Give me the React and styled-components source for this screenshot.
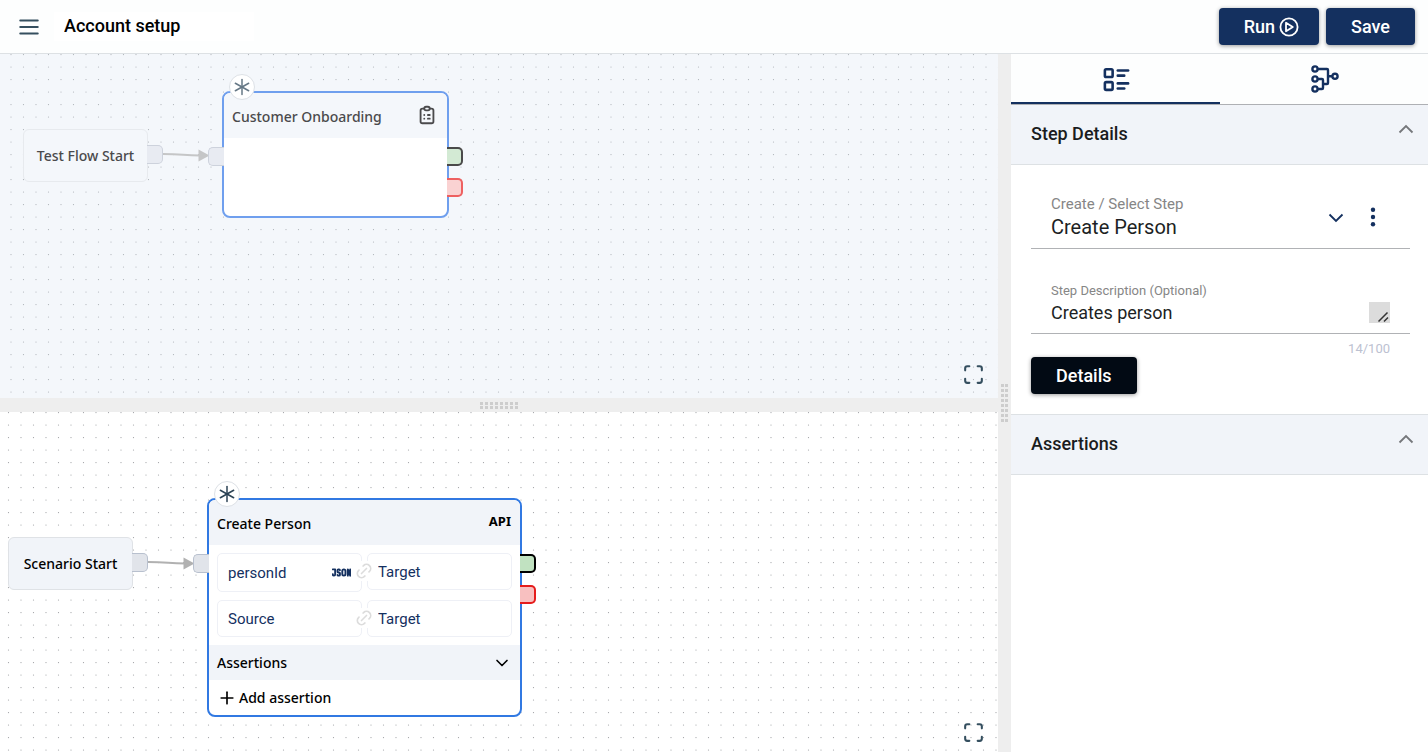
/* eslint-disable react/prop-types */
import { useId, useState } from "react";
import styled, { createGlobalStyle, css } from "styled-components";
import {
  TbAsterisk,
  TbChevronDown,
  TbClipboardList,
  TbJson,
  TbLink,
  TbListDetails,
  TbMaximize,
  TbMenu2,
  TbPlus,
} from "react-icons/tb";

const GlobalStyles = createGlobalStyle`
  :root {
    --color-navy: #14305f;
    --color-slate: #354f5f;
    --color-tint: #f1f4f9;
    --color-line: #dde1e4;
    --font-ui: Roboto, "Liberation Sans", sans-serif;
    --font-node: "Noto Sans", "Open Sans", sans-serif;
  }

  *,
  *::before,
  *::after {
    box-sizing: border-box;
  }

  body {
    margin: 0;
    font-family: var(--font-ui);
    color: #1d1f24;
    background-color: #fff;
  }

  button,
  input,
  select,
  textarea {
    font: inherit;
    color: inherit;
  }
`;

const Page = styled.div`
  display: grid;
  grid-template-rows: auto 1fr;
  min-height: 100vh;
`;

const Header = styled.header`
  display: flex;
  align-items: center;
  gap: 12px;
  padding: 8px 13px 8px 16px;
  background-color: #fdfefe;
  border-bottom: 1px solid var(--color-line);
`;

const IconButton = styled.button`
  display: flex;
  padding: 0;
  border: none;
  background: none;
  color: ${(props) => props.$color || "var(--color-slate)"};
  cursor: pointer;
`;

const TitleInput = styled.input`
  flex: 1;
  min-width: 0;
  max-width: 200px;
  padding: 3px 10px 5px;
  border: none;
  font-size: 18px;
  font-weight: 500;
  color: #000;
  background-color: #fff;
`;

const HeaderActions = styled.div`
  display: flex;
  gap: 7px;
  margin-left: auto;
`;

const Button = styled.button`
  display: flex;
  align-items: center;
  gap: 4px;
  height: 37px;
  padding: 0 ${(props) => (props.$hasIcon ? 20 : 25)}px 0 25px;
  border: none;
  border-radius: 4px;
  font-size: 18px;
  font-weight: 500;
  color: #fff;
  background-color: ${(props) => props.$bg || "var(--color-navy)"};
  box-shadow: 0 1px 4px rgba(0, 0, 0, 0.4);
  cursor: pointer;
`;

const Workspace = styled.div`
  display: grid;
  grid-template-columns: minmax(0, 1fr) 13px minmax(320px, 417px);
`;

const Canvases = styled.main`
  display: grid;
  grid-template-rows: 344fr 14px 340fr;
`;

const Splitter = styled.div`
  display: flex;
  align-items: center;
  justify-content: center;
  background-color: #eee;
  cursor: ${(props) => (props.$vertical ? "col-resize" : "row-resize")};
`;

const Grip = styled.div`
  width: ${(props) => (props.$vertical ? 7 : 39)}px;
  height: ${(props) => (props.$vertical ? 39 : 7)}px;
  background-image: conic-gradient(
    from 270deg at 3px 3px,
    #cdcdcd 90deg,
    transparent 0
  );
  background-size: ${(props) => (props.$vertical ? "4px 5px" : "5px 4px")};
`;

/* Canvas and nodes */

const activeColors = css`
  --canvas: #fff;
  --dot: #9a9ca0;
  --edge: #b1b1b1;
  --text: #000;
  --icon: #2b4254;
  --selected: #3179e2;
  --node: #f1f4f9;
  --node-line: #dfe2e6;
  --source: #e1e4ea;
  --source-line: #b8c0ce;
  --pass: #c1e2c1;
  --pass-line: #000;
  --fail: #f8c0c0;
  --fail-line: #e51c1c;
`;

const mutedColors = css`
  --canvas: #f4f7fb;
  --dot: #abafb5;
  --edge: #c5c6c7;
  --text: #4a4a4c;
  --icon: #667886;
  --selected: #6f9fee;
  --node: #f4f7fb;
  --node-line: #e7eaee;
  --source: #e8ebf2;
  --source-line: #cdd2dc;
  --pass: #d3ead4;
  --pass-line: #4a4a4a;
  --fail: #fad2d2;
  --fail-line: #ee6060;
`;

const Canvas = styled.section`
  ${(props) => (props.$muted ? mutedColors : activeColors)}
  position: relative;
  overflow: hidden;
  background-color: var(--canvas);
`;

const Backdrop = styled.svg`
  position: absolute;
  inset: 0;
  width: 100%;
  height: 100%;
`;

const NodeBox = styled.div`
  position: absolute;
  left: ${(props) => props.$x}px;
  top: ${(props) => props.$y}px;
  font-family: var(--font-node);
  font-size: 14px;
  font-weight: 500;
  color: var(--text);
`;

const StartBox = styled(NodeBox)`
  display: flex;
  align-items: center;
  justify-content: center;
  width: 125px;
  height: 53px;
  border: 1px solid var(--node-line);
  border-radius: 6px;
  background-color: var(--node);
`;

const StepBox = styled(NodeBox)`
  width: ${(props) => props.$width}px;
  border: 2px solid var(--selected);
  border-radius: 8px;
  background-color: #fff;
`;

const StepHeader = styled.div`
  display: flex;
  align-items: center;
  justify-content: space-between;
  height: 45px;
  padding: 2px 9px 0 8px;
  border-radius: 6px 6px 0 0;
  background-color: var(--node);

  svg {
    margin-bottom: 4px;
  }
`;

const EmptyBody = styled.div`
  height: 78px;
`;

const ApiTag = styled.span`
  padding-bottom: 6px;
  font-size: 13px;
  font-weight: 700;
`;

const Badge = styled.span`
  position: absolute;
  left: 5px;
  top: -19px;
  display: flex;
  align-items: center;
  justify-content: center;
  width: 26px;
  height: 26px;
  border: 1px solid #dde1e6;
  border-radius: 50%;
  color: var(--icon);
  background-color: #fff;
`;

const Handle = styled.span`
  position: absolute;
  top: ${(props) => props.$top}px;
  ${(props) => (props.$left ? "left" : "right")}: -16px;
  width: 16px;
  height: 19px;
  border: ${(props) => (props.$kind === "source" ? 1 : 2)}px solid
    var(--${(props) => props.$kind}-line);
  ${(props) => (props.$left ? "border-right" : "border-left")}: none;
  border-radius: ${(props) => (props.$left ? "5px 0 0 5px" : "0 5px 5px 0")};
  background-color: var(--${(props) => props.$kind});
`;

const Mappings = styled.div`
  display: grid;
  gap: 8px;
  padding: 8px;
`;

const MappingRow = styled.div`
  position: relative;
  display: grid;
  grid-template-columns: 1fr 1fr;
  align-items: start;
  gap: 5px;
`;

const Cell = styled.label`
  display: flex;
  align-items: center;
  height: ${(props) => (props.$tall ? 39 : 37)}px;
  padding: 0 10px;
  border: 1px solid #eef0f6;
  border-radius: 5px;
  font-family: var(--font-ui);
  font-size: 15px;
  font-weight: 400;
  color: var(--color-navy);

  input {
    flex: 1;
    min-width: 0;
    width: 100%;
    padding: 0;
    border: none;
    background: none;
  }

  input::placeholder {
    color: var(--color-navy);
    opacity: 1;
  }
`;

const LinkMark = styled.span`
  position: absolute;
  left: 50%;
  top: 8px;
  display: flex;
  align-items: center;
  justify-content: center;
  width: 20px;
  height: 20px;
  margin-left: -11px;
  color: #dcdcdc;
  background-color: #fff;
`;

const AssertionsToggle = styled.button`
  display: flex;
  align-items: center;
  justify-content: space-between;
  width: 100%;
  height: 35px;
  padding: 0 8px;
  border: none;
  background-color: var(--node);
`;

const AddAssertion = styled.button`
  display: flex;
  align-items: center;
  gap: 2px;
  width: 100%;
  height: 35px;
  padding: 0 8px;
  border: none;
  background: none;
`;

const FitButton = styled(IconButton)`
  position: absolute;
  right: 12px;
  bottom: ${(props) => props.$bottom}px;
`;

/* Side panel */

const Panel = styled.aside`
  background-color: #fff;
`;

const Tabs = styled.div`
  display: flex;
  border-bottom: 1px solid #aeb0b4;
`;

const Tab = styled.button`
  flex: 1;
  display: flex;
  align-items: center;
  justify-content: center;
  height: 50px;
  padding: 2px 0 0 2px;
  border: none;
  border-bottom: 2px solid
    ${(props) => (props.$active ? "var(--color-navy)" : "transparent")};
  color: var(--color-navy);
  background-color: #fdfefe;
`;

const SectionHeader = styled.button`
  display: flex;
  align-items: flex-start;
  justify-content: space-between;
  width: 100%;
  padding: 16px 14px 18px 20px;
  border: none;
  border-bottom: 1px solid var(--color-line);
  font-size: 18px;
  font-weight: 500;
  line-height: 25px;
  color: #1a1c20;
  background-color: var(--color-tint);
`;

const SectionBody = styled.div`
  padding: 20px 18px 20px 20px;
  border-bottom: 1px solid var(--color-line);
`;

const SelectRow = styled.div`
  display: flex;
  align-items: center;
  gap: 26px;
  padding: 9px 34px 8px 20px;
  border-bottom: 1px solid #b0b2b5;
`;

const SelectField = styled.div`
  position: relative;
  flex: 1;

  svg {
    position: absolute;
    right: 0;
    top: 16px;
    color: var(--color-navy);
    pointer-events: none;
  }
`;

const Label = styled.label`
  display: block;
  font-size: ${(props) => (props.$small ? 13 : 15)}px;
  line-height: 20px;
  color: #868686;
`;

const Select = styled.select`
  display: block;
  width: 100%;
  height: 26px;
  padding: 0;
  border: none;
  font-size: 20px;
  appearance: none;
  background: none;
`;

const TextField = styled.div`
  position: relative;
  margin-top: 32px;
  padding: 0 20px 8px;
  border-bottom: 1px solid #b0b2b5;
`;

const TextArea = styled.textarea`
  display: block;
  width: 100%;
  height: 24px;
  padding: 0;
  border: none;
  font-size: 18px;
  line-height: 24px;
  resize: none;
  overflow: hidden;
  background: none;
`;

const Resizer = styled.span`
  position: absolute;
  right: 20px;
  bottom: 10px;
  display: flex;
  background-color: #dcdcdc;
`;

const Counter = styled.p`
  margin: 0;
  padding: 7px 20px 0;
  font-size: 13px;
  line-height: 16px;
  text-align: right;
  color: #bcc1d1;
`;

function PlayCircle() {
  return (
    <svg width="20" height="20" viewBox="0 0 20 20" fill="none" stroke="#fff">
      <circle cx="10" cy="10" r="8.6" strokeWidth="1.8" />
      <path d="M7 5.7v8.6l6.8-4.3z" strokeWidth="1.8" strokeLinejoin="round" />
    </svg>
  );
}

function FlowIcon() {
  return (
    <svg
      width="30"
      height="30"
      viewBox="0 0 30 30"
      fill="none"
      stroke="currentColor"
      strokeWidth="2.4"
    >
      <circle cx="5" cy="5" r="2.6" />
      <circle cx="5" cy="15" r="2.6" />
      <circle cx="5" cy="25" r="2.6" />
      <circle cx="25" cy="12.3" r="2.6" />
      <path d="M8 5h9a1 1 0 0 1 1 1v13a1 1 0 0 1-1 1h-4" />
      <path d="M8 15h4a1 1 0 0 1 1 1v8a1 1 0 0 1-1 1H8M18 12.3h4" />
    </svg>
  );
}

function Chevron({ up, color = "currentColor" }) {
  return (
    <svg width="16" height="16" viewBox="0 0 16 16" fill="none">
      <path
        d={up ? "M1.5 11.5 8 5l6.5 6.5" : "M1.5 4.5 8 11l6.5-6.5"}
        stroke={color}
        strokeWidth="1.8"
      />
    </svg>
  );
}

function MoreDots() {
  return (
    <svg width="6" height="20" viewBox="0 0 6 20" fill="currentColor">
      <circle cx="3" cy="2.8" r="2.2" />
      <circle cx="3" cy="10" r="2.2" />
      <circle cx="3" cy="17.2" r="2.2" />
    </svg>
  );
}

function ResizeMark() {
  return (
    <svg width="21" height="21" viewBox="0 0 21 21" stroke="#333">
      <path d="M9.5 19.5l9-9M15 19.5l4-4" strokeWidth="1.5" />
    </svg>
  );
}

// Dotted grid plus the edge that runs between the two nodes
function CanvasBackdrop({ offsetX, edgeX, edgeY }) {
  const id = useId();

  return (
    <Backdrop aria-hidden="true">
      <pattern
        id={id}
        x={offsetX}
        y="0"
        width="25"
        height="25"
        patternUnits="userSpaceOnUse"
      >
        <g fill="var(--dot)">
          <circle cx="1.5" cy="0.6" r="0.6" />
          <circle cx="14" cy="0.6" r="0.6" />
          <circle cx="1.5" cy="13" r="0.6" />
          <circle cx="14" cy="13" r="0.6" />
        </g>
      </pattern>
      <rect width="100%" height="100%" fill={`url(#${id})`} />
      <g transform={`translate(${edgeX} ${edgeY})`}>
        <path
          d="M0 0C20 0 20 1.5 37 1.5"
          fill="none"
          stroke="var(--edge)"
          strokeWidth="2"
        />
        <path d="M35.5-4.5v12l11-6z" fill="var(--edge)" />
      </g>
    </Backdrop>
  );
}

function StartNode({ x, y, children }) {
  return (
    <StartBox $x={x} $y={y}>
      {children}
      <Handle $kind="source" $top={15} />
    </StartBox>
  );
}

function StepNode({ x, y, width, children }) {
  return (
    <StepBox $x={x} $y={y} $width={width}>
      {children}
      <Badge>
        <TbAsterisk size={20} strokeWidth={1.8} />
      </Badge>
      <Handle $kind="source" $left $top={54} />
      <Handle $kind="pass" $top={54} />
      <Handle $kind="fail" $top={85} />
    </StepBox>
  );
}

function Mapping({ value, hasJson }) {
  return (
    <MappingRow>
      <Cell $tall={hasJson}>
        <input aria-label="Source" placeholder="Source" defaultValue={value} />
        {hasJson && <TbJson size={19} strokeWidth={2.4} />}
      </Cell>
      <Cell>
        <input aria-label="Target" placeholder="Target" />
      </Cell>
      <LinkMark>
        <TbLink size={20} />
      </LinkMark>
    </MappingRow>
  );
}

function TestFlow() {
  return (
    <Canvas $muted>
      <CanvasBackdrop offsetX={22} edgeX={163} edgeY={100} />
      <StartNode x={23} y={75}>
        Test Flow Start
      </StartNode>
      <StepNode x={222} y={37} width={227}>
        <StepHeader>
          Customer Onboarding
          <TbClipboardList size={22} />
        </StepHeader>
        <EmptyBody />
      </StepNode>
      <FitButton $bottom={11} aria-label="Fit test flow">
        <TbMaximize size={25} />
      </FitButton>
    </Canvas>
  );
}

function Scenario() {
  return (
    <Canvas>
      <CanvasBackdrop offsetX={7} edgeX={148} edgeY={150} />
      <StartNode x={8} y={125}>
        Scenario Start
      </StartNode>
      <StepNode x={207} y={86} width={315}>
        <StepHeader>
          Create Person
          <ApiTag>API</ApiTag>
        </StepHeader>
        <Mappings>
          <Mapping value="personId" hasJson />
          <Mapping />
        </Mappings>
        <AssertionsToggle>
          Assertions
          <TbChevronDown size={20} />
        </AssertionsToggle>
        <AddAssertion>
          <TbPlus size={20} />
          Add assertion
        </AddAssertion>
      </StepNode>
      <FitButton $bottom={7} aria-label="Fit scenario">
        <TbMaximize size={25} />
      </FitButton>
    </Canvas>
  );
}

function StepPanel() {
  const [tab, setTab] = useState("details");

  return (
    <Panel>
      <Tabs>
        <Tab
          aria-label="Step details"
          $active={tab === "details"}
          onClick={() => setTab("details")}
        >
          <TbListDetails size={31} />
        </Tab>
        <Tab
          aria-label="Data mapping"
          $active={tab === "mapping"}
          onClick={() => setTab("mapping")}
        >
          <FlowIcon />
        </Tab>
      </Tabs>

      <SectionHeader>
        Step Details
        <Chevron up color="#75777b" />
      </SectionHeader>
      <SectionBody>
        <SelectRow>
          <SelectField>
            <Label htmlFor="step">Create / Select Step</Label>
            <Select id="step" defaultValue="Create Person">
              <option>Create Person</option>
            </Select>
            <Chevron />
          </SelectField>
          <IconButton
            aria-label="More step options"
            $color="var(--color-navy)"
          >
            <MoreDots />
          </IconButton>
        </SelectRow>

        <TextField>
          <Label $small htmlFor="description">
            Step Description (Optional)
          </Label>
          <TextArea id="description" rows={1} defaultValue="Creates person" />
          <Resizer>
            <ResizeMark />
          </Resizer>
        </TextField>
        <Counter>14/100</Counter>
        <Button $bg="#020a14">Details</Button>
      </SectionBody>

      <SectionHeader>
        Assertions
        <Chevron up color="#75777b" />
      </SectionHeader>
    </Panel>
  );
}

function App() {
  return (
    <>
      <GlobalStyles />
      <Page>
        <Header>
          <IconButton aria-label="Menu">
            <TbMenu2 size={26} />
          </IconButton>
          <TitleInput aria-label="Flow name" defaultValue="Account setup" />
          <HeaderActions>
            <Button $hasIcon>
              Run
              <PlayCircle />
            </Button>
            <Button>Save</Button>
          </HeaderActions>
        </Header>
        <Workspace>
          <Canvases>
            <TestFlow />
            <Splitter>
              <Grip />
            </Splitter>
            <Scenario />
          </Canvases>
          <Splitter $vertical>
            <Grip $vertical />
          </Splitter>
          <StepPanel />
        </Workspace>
      </Page>
    </>
  );
}

export default App;
